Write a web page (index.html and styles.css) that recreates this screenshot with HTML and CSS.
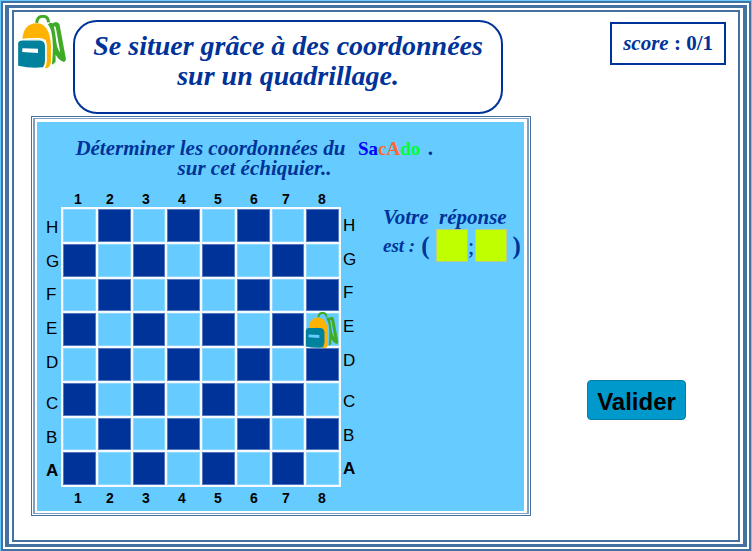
FILE: index.html
```html
<!DOCTYPE html>
<html lang="fr">
<head>
<meta charset="utf-8">
<title>Se situer grâce à des coordonnées</title>
<link rel="stylesheet" href="styles.css">
</head>
<body>
<svg class="defs" aria-hidden="true">
  <symbol id="bag" viewBox="24 21 144 160">
    <path d="M80 45C81 29 91 25 99 25C108 25 115 30 116 43" fill="none" stroke="#3faa26" stroke-width="9"/>
    <path d="M114 50Q120 42 128 46L138 42Q146 42 149 50L168 152Q169 162 162 163L155 160Q146 156 137 141L137 162Q133 168 126 171Q131 120 127 88Q124 62 114 50Z" fill="#3faa26"/>
    <path d="M132 56Q136 53 138 60L151 134Q144 128 140 108Q137 82 132 56Z" fill="#fff"/>
    <path d="M37 96C38 64 53 45 82 46C110 47 122 78 123 115V160Q123 174 113 181H100L108 96Z" fill="#ffb300"/>
    <path d="M31 101Q37 93 60 93H88Q107 93 108 112V160Q107 175 101 182" fill="none" stroke="#fff" stroke-width="5"/>
    <path d="M24 107Q24 98 38 98H90Q104 99 105 113V155Q104 173 98 179Q62 183 24 174Z" fill="#00829f"/>
    <path d="M37 121L84 123V136L36 133Z" fill="#fff"/>
  </symbol>
  <symbol id="bag-piece" viewBox="24 21 144 160">
    <path d="M80 45C81 29 91 25 99 25C108 25 115 30 116 43" fill="none" stroke="#3faa26" stroke-width="9"/>
    <path d="M114 50Q120 42 128 46L138 42Q146 42 149 50L168 152Q169 162 162 163L155 160Q146 156 137 141L137 162Q133 168 126 171Q131 120 127 88Q124 62 114 50Z" fill="#3faa26"/>
    <path d="M132 56Q136 53 138 60L151 134Q144 128 140 108Q137 82 132 56Z" fill="#66ccff"/>
    <path d="M37 96C38 64 53 45 82 46C110 47 122 78 123 115V160Q123 174 113 181H96L104 96Z" fill="#ffb300"/>
    <path d="M24 107Q24 92 38 92H90Q106 93 107 113V155Q104 173 98 179Q62 183 24 174Z" fill="#00829f"/>
    <path d="M37 121L84 123V136L36 133Z" fill="#66ccff"/>
  </symbol>
</svg>
<div class="frame frame-outer"><div class="frame frame-middle"><div class="frame frame-inner">
  <main class="exercise">
    <div class="left">
      <header class="header">
        <svg class="logo" role="img" aria-label="SacAdo"><use href="#bag"/></svg>
        <h1 class="title">Se situer grâce à des coordonnées<br>sur un quadrillage.</h1>
      </header>
      <section class="panel"><div class="panel-line"><div class="panel-body">
        <p class="statement">Déterminer les coordonnées du&ensp;<span class="brand"><span class="blue">Sa</span><span class="orange">cA</span><span class="green">do</span></span> .<br>sur cet échiquier..</p>
        <div class="work">
          <div class="chess">
            <div class="cols"><span>1</span><span>2</span><span>3</span><span>4</span><span>5</span><span>6</span><span>7</span><span>8</span></div>
            <div class="rows rows-left"><span>H</span><span>G</span><span>F</span><span>E</span><span>D</span><span>C</span><span>B</span><b>A</b></div>
            <div class="board">
              <i></i><i class="dark"></i><i></i><i class="dark"></i><i></i><i class="dark"></i><i></i><i class="dark"></i>
              <i class="dark"></i><i></i><i class="dark"></i><i></i><i class="dark"></i><i></i><i class="dark"></i><i></i>
              <i></i><i class="dark"></i><i></i><i class="dark"></i><i></i><i class="dark"></i><i></i><i class="dark"></i>
              <i class="dark"></i><i></i><i class="dark"></i><i></i><i class="dark"></i><i></i><i class="dark"></i><i class="target"><svg class="piece" role="img" aria-label="Sac à dos"><use href="#bag-piece"/></svg></i>
              <i></i><i class="dark"></i><i></i><i class="dark"></i><i></i><i class="dark"></i><i></i><i class="dark"></i>
              <i class="dark"></i><i></i><i class="dark"></i><i></i><i class="dark"></i><i></i><i class="dark"></i><i></i>
              <i></i><i class="dark"></i><i></i><i class="dark"></i><i></i><i class="dark"></i><i></i><i class="dark"></i>
              <i class="dark"></i><i></i><i class="dark"></i><i></i><i class="dark"></i><i></i><i class="dark"></i><i></i>
            </div>
            <div class="rows rows-right"><span>H</span><span>G</span><span>F</span><span>E</span><span>D</span><span>C</span><span>B</span><b>A</b></div>
            <div class="cols cols-bottom"><span>1</span><span>2</span><span>3</span><span>4</span><span>5</span><span>6</span><span>7</span><span>8</span></div>
          </div>
          <form class="answer" id="answer">
            <div>Votre&ensp;réponse</div>
            <div class="pair">
              <span class="est">est :</span><span class="paren">(</span>
              <input class="coord" type="text" aria-label="Colonne">
              <span class="semi">;</span>
              <input class="coord" type="text" aria-label="Ligne">
              <span class="paren close">)</span>
            </div>
          </form>
        </div>
      </div></div></section>
    </div>
    <aside class="side">
      <div class="score">score <span class="upright">: 0/1</span></div>
      <button class="validate" type="submit" form="answer">Valider</button>
    </aside>
  </main>
</div></div></div>
</body>
</html>
```
FILE: styles.css
```css
* { box-sizing: border-box; }

body {
  margin: 0;
  min-height: 100vh;
  display: flex;
  padding: 1px 1px 0;
  background: #66ccff;
  color: #003399;
  font-family: "Liberation Serif", serif;
}

.defs { position: absolute; width: 0; height: 0; }

.frame { flex: 1; display: flex; background: #fff; border: 2px solid #4472a0; }
.frame-outer { padding: 2px 2px; }
.frame-middle { border-width: 3px 4px; padding: 2px 3px; }

.exercise {
  flex: 1;
  display: grid;
  grid-template-columns: minmax(0, 5fr) minmax(0, 2fr);
}

.header { display: flex; align-items: flex-start; padding: 3px 28px 0 4px; gap: 7px; }
.logo { width: 48px; height: 53px; flex: none; }
.title {
  flex: 1;
  margin: 5px 0 0;
  padding: 9px 0 21px;
  border: 2px solid #003399;
  border-radius: 24px;
  text-align: center;
  font-size: 28px;
  line-height: 30px;
  font-style: italic;
  white-space: nowrap;
}

.panel { margin: 2px 0 0 17px; border: 1px solid #4472a0; padding: 1px; }
.panel-line { border: 1px solid #7fa0c0; border-width: 1px 2px; padding: 3px 3px 2px 2px; }
.panel-body { background: #66ccff; padding: 16px 0 5px; }

.statement {
  margin: 0 52px 0 0;
  text-align: center;
  font-size: 21px;
  line-height: 20px;
  font-weight: bold;
  font-style: italic;
  white-space: nowrap;
}
.brand { font-style: normal; font-size: 19px; line-height: 16px; margin: 0 3px 0 2px; }
.blue { color: #0000ff; }
.orange { color: #ff6633; }
.green { color: #00ff33; }

.work { display: flex; align-items: flex-start; padding: 13px 0 0 9px; }
.chess {
  display: grid;
  grid-template-columns: 15px 280px 15px;
  color: #000;
  font-family: "Liberation Sans", sans-serif;
}
.cols {
  grid-column: 2;
  display: grid;
  grid-template-columns: 32px 36px 36px 36px 36px 32px 36px 36px;
  padding-left: 13px;
  font-size: 14px;
  font-weight: bold;
  line-height: 16px;
}
.cols-bottom { padding-top: 3px; }
.rows {
  display: grid;
  grid-row: 2;
  grid-template-rows: 34px 33px 34px 34px 41px 34px 33px 34px;
  height: 280px;
  font-size: 17px;
  line-height: 38px;
}
.rows-left { grid-column: 1; padding-top: 2px; }
.rows-right { grid-column: 3; padding-left: 2px; }
.board {
  grid-row: 2;
  grid-column: 2;
  display: grid;
  grid-template-columns: repeat(8, 1fr);
  grid-template-rows: repeat(8, 1fr);
  gap: 2px;
  padding: 2px;
  height: 280px;
  background: #f4faff;
}
.board i { background: #66ccff; border: 1px solid #8fd9ff; }
.board .dark { background: #003399; border-color: #5577bb; }
.board .target { position: relative; }
.piece { position: absolute; left: -3px; top: -2px; width: 36px; height: 36px; }

.answer {
  margin: 16px 0 0 27px;
  font-size: 21px;
  line-height: 20px;
  font-weight: bold;
  font-style: italic;
  white-space: nowrap;
}
.pair { display: flex; align-items: center; margin-top: 2px; }
.est { font-size: 19px; }
.paren { font-size: 25px; font-style: normal; margin: 0 6px; }
.close { margin: 0 0 0 6px; }
.semi { width: 7px; text-align: center; font-size: 24px; font-style: normal; font-weight: normal; }
.coord {
  width: 32px;
  height: 33px;
  padding: 0 4px;
  border: 1px solid #b5cf8a;
  background: #bfff00;
  font: bold 18px "Liberation Sans", sans-serif;
}

.side {
  display: flex;
  flex-direction: column;
  justify-content: space-between;
  padding: 10px 12px 120px 56px;
}
.score {
  align-self: flex-end;
  padding: 10px 11px;
  border: 2px solid #003399;
  font-size: 21px;
  line-height: 19px;
  font-weight: bold;
  font-style: italic;
  white-space: nowrap;
}
.upright { font-style: normal; }
.validate {
  align-self: flex-start;
  height: 40px;
  padding: 3px 9px 0;
  border: 1px solid #0080a8;
  border-radius: 4px;
  background: #0099cc;
  color: #000;
  font: bold 24px "Liberation Sans", sans-serif;
}
```
